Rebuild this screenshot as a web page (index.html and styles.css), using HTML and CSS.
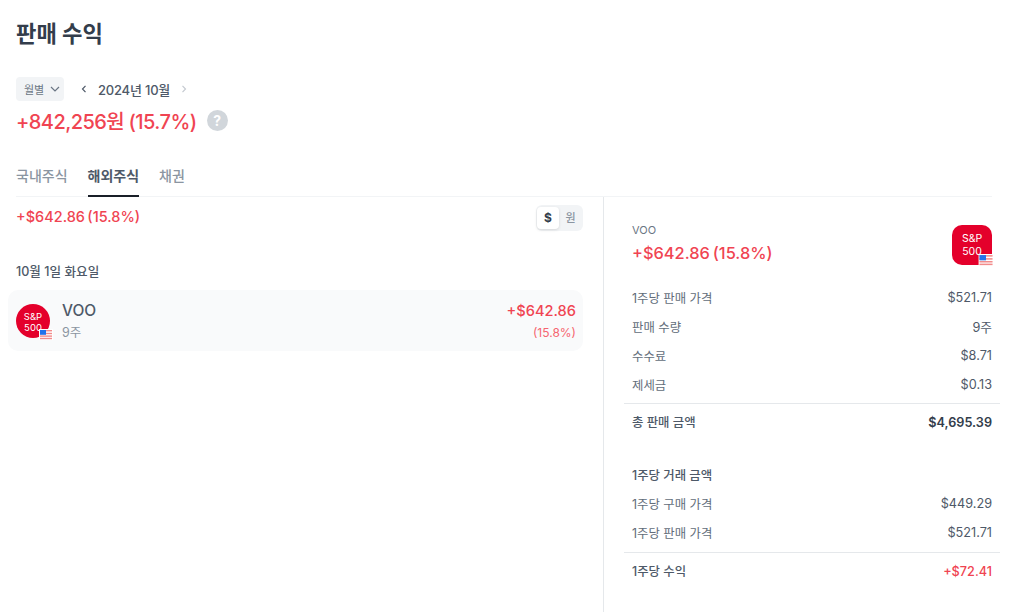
FILE: index.html
```html
<!DOCTYPE html>
<html lang="ko">
<head>
    <meta charset="UTF-8">
    <title>판매 수익</title>
    <link rel="stylesheet" href="styles.css">
</head>
<body>
    <div class="page">
        <h1 class="title">판매 수익</h1>

        <div class="period">
            <button class="period-select">월별
                <svg width="10" height="6" viewBox="0 0 10 6"><path d="M1 1l4 4 4-4" fill="none" stroke="#6b7684" stroke-width="1.2"/></svg>
            </button>
            <svg class="arrow" width="6" height="8" viewBox="0 0 6 8"><path d="M4.5 .8L1.5 4l3 3.2" fill="none" stroke="#4e5968" stroke-width="1.2"/></svg>
            <span class="period-label">2024년 10월</span>
            <svg class="arrow" width="6" height="8" viewBox="0 0 6 8"><path d="M1.5 .8L4.5 4l-3 3.2" fill="none" stroke="#c5cad1" stroke-width="1.2"/></svg>
        </div>

        <div class="total">
            <span>+842,256원 (15.7%)</span>
            <span class="help">?</span>
        </div>

        <div class="tabs">
            <span class="tab">국내주식</span>
            <span class="tab active">해외주식</span>
            <span class="tab">채권</span>
        </div>

        <div class="content">
            <div class="list">
                <div class="list-head">
                    <span class="list-sum">+$642.86 (15.8%)</span>
                    <div class="toggle">
                        <span class="toggle-item on">$</span>
                        <span class="toggle-item">원</span>
                    </div>
                </div>

                <div class="date">10월 1일 화요일</div>

                <div class="stock">
                    <div class="logo round">
                        S&amp;P<br>500
                        <svg class="flag" viewBox="0 0 14 11"><use href="#us-flag"/></svg>
                    </div>
                    <div class="stock-info">
                        <div class="stock-name">VOO</div>
                        <div class="stock-qty">9주</div>
                    </div>
                    <div class="stock-result">
                        <div class="stock-amount">+$642.86</div>
                        <div class="stock-rate">(15.8%)</div>
                    </div>
                </div>
            </div>

            <div class="detail">
                <div class="detail-head">
                    <div>
                        <div class="detail-name">VOO</div>
                        <div class="detail-sum">+$642.86 (15.8%)</div>
                    </div>
                    <div class="logo square">
                        S&amp;P<br>500
                        <svg class="flag" viewBox="0 0 14 11"><use href="#us-flag"/></svg>
                    </div>
                </div>

                <div class="row"><span>1주당 판매 가격</span><span class="val">$521.71</span></div>
                <div class="row"><span>판매 수량</span><span class="val">9주</span></div>
                <div class="row"><span>수수료</span><span class="val">$8.71</span></div>
                <div class="row"><span>제세금</span><span class="val">$0.13</span></div>
                <div class="row total-row"><span>총 판매 금액</span><span class="val">$4,695.39</span></div>

                <div class="sub-title">1주당 거래 금액</div>
                <div class="row"><span>1주당 구매 가격</span><span class="val">$449.29</span></div>
                <div class="row"><span>1주당 판매 가격</span><span class="val">$521.71</span></div>
                <div class="row total-row profit"><span>1주당 수익</span><span class="val plus">+$72.41</span></div>
            </div>
        </div>
    </div>

    <!-- Flag used by both logos -->
    <svg width="0" height="0" class="defs">
        <symbol id="us-flag" viewBox="0 0 14 11">
            <rect width="14" height="11" fill="#fff"/>
            <rect x="1" y="1" width="12" height="1.4" fill="#f28b8b"/>
            <rect x="1" y="3.8" width="12" height="1.4" fill="#f28b8b"/>
            <rect x="1" y="6.4" width="12" height="1.4" fill="#f28b8b"/>
            <rect x="1" y="8.8" width="12" height="1.4" fill="#f28b8b"/>
            <rect x="1" y="1" width="6" height="4.8" fill="#2272eb"/>
        </symbol>
    </svg>
</body>
</html>
```

FILE: styles.css
```css
* {
    box-sizing: border-box;
    margin: 0;
    padding: 0;
}

html, body {
    height: 100%;
    overflow: hidden;
}

body {
    background: #fff;
    color: #333d4b;
    font-family: Inter, "Noto Sans CJK KR", sans-serif;
}

.defs {
    position: absolute;
}

.page {
    display: flex;
    flex-direction: column;
    height: 612px;
    padding: 0 24px 0 16px;
}

.title {
    margin-top: 19px;
    font-size: 22.2px;
    line-height: 30px;
    font-weight: 700;
}

/* Period selector */
.period {
    display: flex;
    align-items: center;
    margin-top: 28px;
    height: 24px;
}

.period-select {
    display: flex;
    align-items: center;
    gap: 6px;
    height: 24px;
    width: 48px;
    padding-left: 8px;
    border: none;
    border-radius: 4px;
    background: #f2f4f6;
    color: #6b7684;
    font-family: inherit;
    font-size: 11px;
}

.arrow {
    margin-left: 17px;
}

.period-label {
    margin-left: 11px;
    margin-right: -6px;
    color: #4e5968;
    font-size: 13px;
    font-weight: 500;
    letter-spacing: -0.2px;
}

.total {
    display: flex;
    align-items: center;
    gap: 10px;
    margin-top: 3px;
    height: 32px;
    color: #f04452;
    font-size: 20px;
    font-weight: 500;
    letter-spacing: -0.55px;
    word-spacing: -0.5px;
}

.help {
    display: flex;
    align-items: center;
    justify-content: center;
    width: 21px;
    height: 21px;
    border-radius: 50%;
    background: #d1d6db;
    color: #fff;
    font-size: 14px;
    font-weight: 700;
}

/* Tabs */
.tabs {
    display: flex;
    gap: 20px;
    margin-top: 22px;
    height: 39px;
    border-bottom: 1px solid #f2f4f6;
}

.tab {
    height: 39px;
    padding-top: 7px;
    color: #8b95a1;
    font-size: 14px;
    font-weight: 500;
}

.tab.active {
    color: #4e5968;
    font-weight: 700;
    border-bottom: 2px solid #191f28;
}

/* Columns */
.content {
    display: flex;
    flex: 1;
    min-height: 0;
}

.list {
    width: 567px;
}

.list-head {
    display: flex;
    justify-content: space-between;
    align-items: flex-start;
    padding-top: 8px;
}

.list-sum {
    color: #f04452;
    font-size: 14.5px;
    font-weight: 500;
    line-height: 24px;
    word-spacing: -1.5px;
}

.toggle {
    display: flex;
    padding: 2px 1px;
    width: 47px;
    height: 26px;
    border-radius: 6px;
    background: #f2f4f6;
}

.toggle-item {
    flex: 1;
    text-align: center;
    color: #8b95a1;
    font-size: 11px;
    font-weight: 500;
    line-height: 22px;
}

.toggle-item.on {
    flex: none;
    width: 22px;
    border-radius: 4px;
    background: #fff;
    box-shadow: 0 1px 3px rgba(0, 0, 0, 0.12);
    color: #333d4b;
    font-size: 12px;
    font-weight: 700;
}

.date {
    margin-top: 31px;
    font-size: 12.6px;
    font-weight: 500;
    line-height: 20px;
    color: #4e5968;
}

.stock {
    display: flex;
    align-items: center;
    margin: 8px 0 0 -8px;
    padding: 0 7px 0 8px;
    height: 61px;
    border-radius: 10px;
    background: #f9fafb;
}

.logo {
    position: relative;
    flex: none;
    background: #e4002b;
    color: #fff;
    text-align: center;
}

.logo.round {
    width: 34px;
    height: 34px;
    padding-top: 7px;
    border-radius: 50%;
    font-size: 9.5px;
    line-height: 11px;
}

.logo.square {
    width: 40px;
    height: 40px;
    margin-top: 2px;
    padding-top: 7px;
    border-radius: 10px;
    font-size: 10.5px;
    line-height: 13px;
}

.flag {
    position: absolute;
    right: -3px;
    bottom: -2px;
    width: 14px;
    height: 11px;
}

.logo.square .flag {
    right: -2px;
    bottom: -1px;
    width: 16px;
    height: 12px;
}

.stock-info {
    flex: 1;
    margin-left: 12px;
    padding-top: 1px;
}

.stock-name {
    color: #4e5968;
    font-size: 15.5px;
    font-weight: 500;
    line-height: 22px;
}

.stock-qty {
    color: #8b95a1;
    margin-top: 1px;
    font-size: 12.5px;
    line-height: 20px;
}

.stock-result {
    padding-top: 1px;
    text-align: right;
}

.stock-amount {
    color: #f04452;
    font-size: 14.6px;
    font-weight: 500;
    line-height: 22px;
}

.stock-rate {
    color: #f66570;
    margin-top: 1px;
    font-size: 12px;
    line-height: 20px;
}

/* Detail panel */
.detail {
    flex: none;
    width: 397px;
    margin-left: 20px;
    margin-right: -8px;
    padding: 26px 8px 0 28px;
    border-left: 1px solid #e5e8eb;
}

.detail-head {
    display: flex;
    justify-content: space-between;
    height: 60px;
}

.detail-name {
    color: #6b7684;
    font-size: 11px;
    line-height: 14px;
}

.detail-sum {
    margin-top: 5px;
    color: #f04452;
    font-size: 16.4px;
    font-weight: 500;
    line-height: 22px;
    word-spacing: -1.5px;
}

.row {
    display: flex;
    justify-content: space-between;
    align-items: center;
    height: 29px;
    color: #626d7a;
    font-size: 12.4px;
}

.val {
    color: #4e5968;
    font-size: 12.7px;
}

.total-row {
    height: 37px;
    margin: 4px -8px 0;
    padding: 0 8px;
    border-top: 1px solid #e5e8eb;
    color: #4e5968;
    font-weight: 500;
}

.total-row.profit {
    margin-top: 5px;
}

.total-row .val {
    color: #333d4b;
    font-weight: 600;
}

.total-row .val.plus {
    color: #f04452;
    font-weight: 500;
}

.sub-title {
    margin-top: 21px;
    height: 28px;
    color: #4e5968;
    font-size: 12.4px;
    font-weight: 500;
    line-height: 29px;
}
```
